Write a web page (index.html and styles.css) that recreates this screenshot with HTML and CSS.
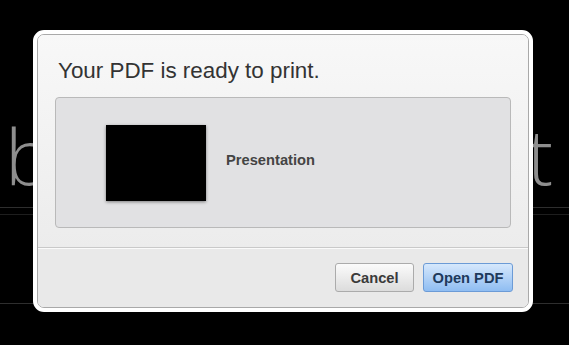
FILE: index.html
```html
<!DOCTYPE html>
<html>
<head>
<meta charset="utf-8">
<link rel="stylesheet" href="styles.css">
</head>
<body>
<div class="slide">
  <div class="slide-title"><span>b</span><span>t</span></div>
  <div class="rule rule-a"></div>
  <div class="rule rule-b"></div>
  <div class="rule rule-c"></div>
</div>

<div class="modal">
  <div class="modal-inner">
    <div class="modal-body">
      <h1 class="modal-title">Your PDF is ready to print.</h1>
      <div class="preview">
        <div class="thumb"></div>
        <div class="doc-name">Presentation</div>
      </div>
    </div>
    <div class="modal-footer">
      <button class="btn btn-cancel">Cancel</button>
      <button class="btn btn-primary">Open PDF</button>
    </div>
  </div>
</div>
</body>
</html>
```

FILE: styles.css
```css
html, body {
  margin: 0;
  padding: 0;
  background: #000;
  width: 569px;
  height: 345px;
  overflow: hidden;
  font-family: "Liberation Sans", Arial, sans-serif;
}

.slide {
  padding-top: 116px;
}

.slide-title {
  display: flex;
  justify-content: space-between;
  padding: 0 16px 0 5px;
  font-family: "Open Sans", sans-serif;
  font-weight: 300;
  font-size: 78px;
  line-height: 78px;
  color: #8e8e8e;
}

.rule {
  height: 1px;
  background: #2e2e2e;
}
.rule-a { margin-top: 13px; }
.rule-b { margin-top: 6px; background: #1e1e1e; }
.rule-c { margin-top: 88px; }

.modal {
  position: absolute;
  left: 33px;
  top: 30px;
  width: 492px;
  border: 4px solid #fff;
  border-radius: 11px;
  background: #fff;
}

.modal-inner {
  border: 1px solid #a9a9a9;
  border-radius: 7px;
  overflow: hidden;
}

.modal-body {
  background: linear-gradient(#f8f8f8, #ececec);
  padding: 23px 17px 19px 17px;
  border-bottom: 1px solid #c9c9c9;
}

.modal-title {
  margin: 0 0 13px 3px;
  font-size: 22.4px;
  line-height: 26px;
  font-weight: normal;
  color: #333;
}

.preview {
  display: flex;
  align-items: center;
  height: 129px;
  padding-left: 50px;
  background: #e1e1e3;
  border: 1px solid #b9b9b9;
  border-radius: 4px;
}

.thumb {
  width: 100px;
  height: 76px;
  background: #000;
  box-shadow: 0 1px 3px rgba(0, 0, 0, 0.45);
}

.doc-name {
  margin-left: 20px;
  margin-bottom: 6px;
  font-size: 14.7px;
  font-weight: bold;
  color: #444;
}

.modal-footer {
  display: flex;
  justify-content: flex-end;
  gap: 9px;
  padding: 14px 15px 15px;
  background: #e9e9e9;
  border-top: 1px solid #fafafa;
}

.btn {
  height: 29px;
  padding: 0;
  font-family: "Liberation Sans", Arial, sans-serif;
  font-size: 14.7px;
  font-weight: bold;
  border-radius: 3px;
  cursor: pointer;
}

.btn-cancel {
  width: 79px;
  color: #3a3a3a;
  background: linear-gradient(#fbfbfb, #dcdcdc);
  border: 1px solid #ababab;
}

.btn-primary {
  width: 90px;
  color: #1e3a5c;
  background: linear-gradient(#d6e8fc, #8fbdf2);
  border: 1px solid #6c9bd6;
}
```
